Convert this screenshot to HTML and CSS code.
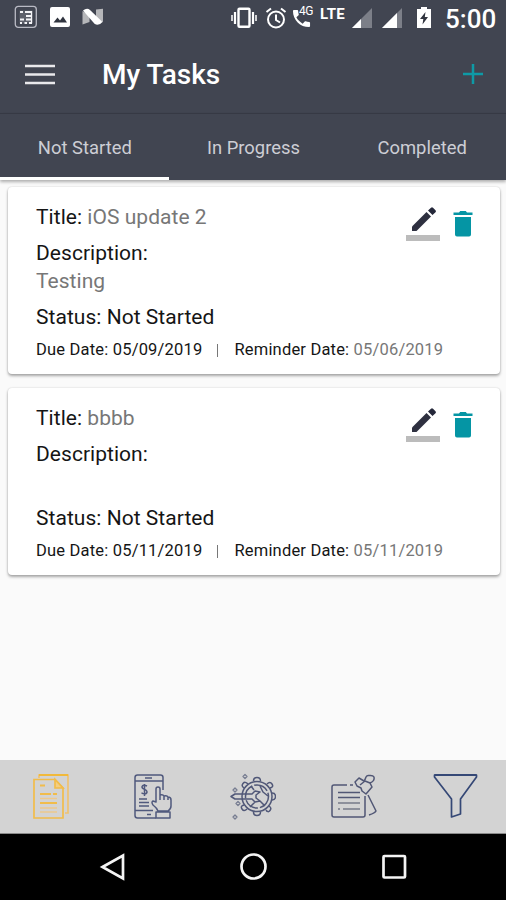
FILE: index.html
```html
<!DOCTYPE html>
<html lang="en">
<head>
<meta charset="utf-8">
<title>My Tasks</title>
<link rel="stylesheet" href="styles.css">
</head>
<body>
<div class="screen">
  <div class="status">
    <div class="status-group">
      <svg width="24" height="24" viewBox="0 0 24 24" fill="none"><rect x="1.3" y="1.3" width="21" height="21" rx="3" stroke="#b9bac4" stroke-width="1.3"/><path d="M5.500 5.500h13v13h-13z" fill="#5d606b"/><path d="M6 7h3M11 7h7M12 11h6M6 14.500h4M12 14.500h6M6 18h2M10.500 18h2.500M15 18h3" stroke="#f4f4f7" stroke-width="1.800"/><path d="M17.500 6v12" stroke="#f4f4f7" stroke-width="1.300"/></svg>
      <svg width="20" height="20" viewBox="0 0 20 20"><rect width="20" height="20" rx="2" fill="#fff"/><path d="M3.500 15.500 7.500 10.500l2.500 3L13 9.500l4 6z" fill="#30343f"/></svg>
      <svg width="22" height="18" viewBox="0 0 22 18"><path d="M.5 3l7 4v7l-7 2.500zM14 1.500l7-.8v13.500l-7-4z" fill="#b5b6b9"/><path d="M1 2.500Q5-.8 8 2l12.500 12q-4 4.500-8 1.800z" fill="#fff"/></svg>
    </div>
    <div class="status-group status-right">
      <svg width="26" height="22" viewBox="0 0 26 22" fill="none" stroke="#fff"><rect x="7.500" y="1.800" width="11" height="18" rx="1" stroke-width="2.400"/><path d="M4 5v12M22 5v12" stroke-width="2.200"/><path d="M1 8v6M25 8v6" stroke-width="1.500"/></svg>
      <svg class="alarm" width="22" height="22" viewBox="0 0 22 22" fill="none" stroke="#fff" stroke-width="2"><circle cx="11" cy="12.500" r="8"/><path d="M11 7.500V13l4 2.500M1.500 5 6 1.500M20.500 5 16 1.500"/></svg>
      <div class="call">
        <svg width="19" height="19" viewBox="2 2 20 20"><path fill="#fff" d="M6.600 10.800c1.400 2.800 3.800 5.100 6.600 6.600l2.200-2.200c.3-.3.700-.4 1-.2 1.100.4 2.300.6 3.600.6.600 0 1 .4 1 1V20c0 .600-.4 1-1 1C10.600 21 3 13.400 3 4c0-.6.400-1 1-1h3.500c.6 0 1 .4 1 1 0 1.300.2 2.500.6 3.600.1.300 0 .7-.2 1z"/></svg>
        <span class="net4g">4G</span>
      </div>
      <span class="lte">LTE</span>
      <svg class="signal" width="20" height="20" viewBox="0 0 20 20"><path d="M0 20 20 0v20z" fill="#7c7f88"/><path d="M0 20 9 11v9z" fill="#fff"/></svg>
      <svg class="signal2" width="20" height="20" viewBox="0 0 20 20"><path d="M0 20 20 0v20z" fill="#7c7f88"/><path d="M0 20 15 5v15z" fill="#fff"/></svg>
      <svg class="battery" width="14" height="21" viewBox="0 0 14 21"><path d="M4 0h6v2h4v19H0V2h4z" fill="#fff"/><path d="M8.500 5 3 12h3.300L5.500 17.500 11 10H7.800z" fill="#30343f"/></svg>
      <span class="clock">5:00</span>
    </div>
  </div>
  <header class="appbar">
    <svg width="30" height="22" viewBox="0 0 30 22"><path d="M0 2h30M0 10.500h30M0 19h30" stroke="#e9e9ec" stroke-width="2.400"/></svg>
    <h1>My Tasks</h1>
    <svg class="add" width="20" height="20" viewBox="0 0 20 20"><path d="M0 10h20M10 0v20" stroke="#0e9aa6" stroke-width="2.500"/></svg>
  </header>
  <nav class="tabs">
    <div class="tab active">Not Started</div>
    <div class="tab">In Progress</div>
    <div class="tab">Completed</div>
  </nav>
  <main class="list">
    <article class="card">
      <div class="info">
        <p class="line title">Title: <span class="muted">iOS update 2</span></p>
        <p class="line">Description:</p>
        <p class="line desc muted">Testing</p>
        <p class="line state">Status: Not Started</p>
        <p class="dates"><span>Due Date: 05/09/2019</span><i class="sep"></i><span>Reminder Date: <span class="muted">05/06/2019</span></span></p>
      </div>
      <div class="actions">
        <svg width="34" height="36" viewBox="0 0 34 36"><path d="M6 20.500 20.500 6l4.500 4.500L10.500 25H6z" fill="#2e3040"/><path d="M22 4.500 25 1.700q1-1 2 0l2.500 2.500q1 1 0 2L26.500 9z" fill="#25283a"/><path d="M0 29h34v6H0z" fill="#bcbcbc"/></svg>
        <svg class="trash" width="20" height="26" viewBox="0 0 20 26"><path d="M.5 1.500H6L7.200 0h5.600L14 1.500h5.500V4H.5zM2 6h16v17.500q0 2-2 2H4q-2 0-2-2z" fill="#0595a4"/></svg>
      </div>
    </article>
    <article class="card">
      <div class="info">
        <p class="line title">Title: <span class="muted">bbbb</span></p>
        <p class="line">Description:</p>
        <p class="line desc muted"></p>
        <p class="line state">Status: Not Started</p>
        <p class="dates"><span>Due Date: 05/11/2019</span><i class="sep"></i><span>Reminder Date: <span class="muted">05/11/2019</span></span></p>
      </div>
      <div class="actions">
        <svg width="34" height="36" viewBox="0 0 34 36"><path d="M6 20.500 20.500 6l4.500 4.500L10.500 25H6z" fill="#2e3040"/><path d="M22 4.500 25 1.700q1-1 2 0l2.500 2.500q1 1 0 2L26.500 9z" fill="#25283a"/><path d="M0 29h34v6H0z" fill="#bcbcbc"/></svg>
        <svg class="trash" width="20" height="26" viewBox="0 0 20 26"><path d="M.5 1.500H6L7.200 0h5.600L14 1.500h5.500V4H.5zM2 6h16v17.500q0 2-2 2H4q-2 0-2-2z" fill="#0595a4"/></svg>
      </div>
    </article>
  </main>
  <nav class="bottom">
    <div class="item docs">
      <svg width="50" height="50" viewBox="0 0 50 50" fill="none" stroke="#f1bc4a" stroke-width="1.700"><path d="M12 6V3h29v38h-3" stroke="#efc271"/><path d="M12 3h29" stroke="#f2b72e"/><path d="M7 7.500h21l8 8.500v30H7z"/><path d="M28 7.500V16h8z" fill="#f3ce82"/><path d="M13 13.500h5M13 22h11M26 22h4M13 31h17" stroke-width="2"/><path d="M13 26.500h17M13 36h17M13 40h17" stroke="#edc98d" stroke-width="1.500"/></svg>
    </div>
    <div class="item">
      <svg width="50" height="50" viewBox="0 0 50 50" fill="none" stroke="#50597d" stroke-width="1.500" stroke-linejoin="round"><path d="M36 18V5.500Q36 3 33.500 3H10.500Q8 3 8 5.500v38Q8 46 10.500 46H29M8 9h28M8 38.500h18"/><path d="M18 6h7M20 42.500h4"/><path d="M20 14q-4-2-5 .7c-.5 3 5 2 5 5 0 3-4 2.300-5.500 1M17.500 12v12M12 27h8M12 30.500h10M12 34h10"/><path d="M29 30V17q0-2 2-2t2 2v6q3-1 4 1 3-1 4 1 3 0 3 3v6q0 3-3 5H31q-1-3-5-6-2-3 0-4zM33 23v5M37 24v4M41 25v3M29 40h14v6H29z"/></svg>
    </div>
    <div class="item gear">
      <svg width="50" height="50" viewBox="0 0 50 50" fill="none" stroke="#515878" stroke-width="1.500" stroke-linejoin="round"><circle cx="31" cy="24.500" r="15"/><circle cx="31" cy="24.500" r="11.500" stroke-dasharray="15 2"/><path d="M27.500 9q0-3.500 3.500-3.500T34.500 9M41 12q3-3 5 0t-2 4M46 21q3.500 0 3.500 3.500T46 28M43 34q3 2 1 4.500t-4-.5M34.500 40q0 3.500-3.500 3.500T27.500 40M21 37q-3 3-5 0t2-4M18 16q-3-2-1-4.500t5 .5"/><path d="M5 24.500 9 22h17l3-3 5 1-4 3v3l4 3-5 1-3-3H9zM34 14l3 6 5 4M25 14l3 4M24 35l5-5M34 29l5 5"/><path d="M19 2.500l2 2-2 2-2-2zM9 16l2 2-2 2-2-2zM12 29.500l2 2-2 2-2-2zM9 43l2 2-2 2-2-2z" stroke="#777d91" stroke-width="1.300"/></svg>
    </div>
    <div class="item clip">
      <svg width="50" height="50" viewBox="0 0 50 50" fill="none" stroke="#515775" stroke-width="1.500" stroke-linejoin="round"><path d="M20 13H7q-2 0-2 2v28q0 2 2 2h29q2 0 2-2V24M23 13h3M11 20.500h22M11 25.500h22"/><path d="M11 31h22M16 37h17M11 37h2" stroke="#777b89"/><path d="m28 10 4-4 5 3q1-1 2-4 1-2 3-1.500 4-.5 5 1.500 1 4-4 6l2 4-6 7-4-3-1-3-4-2zM33 13l5-4 5 2M41 23l8 16q-1 2-7 4"/></svg>
    </div>
    <div class="item">
      <svg width="50" height="50" viewBox="0 0 50 50" fill="none" stroke="#354876" stroke-width="1.700" stroke-linejoin="round"><path d="M4.500 3h42v2l-16 22v15l-9 3V27l-17-22z"/><path d="M4.500 3h42" stroke-width="2"/></svg>
    </div>
  </nav>
  <footer class="sysnav">
    <svg width="28" height="28" viewBox="0 0 28 28"><path d="M4.500 14 25 2.500v23z"/></svg>
    <svg width="28" height="28" viewBox="0 0 28 28"><circle cx="14.500" cy="13.500" r="12"/></svg>
    <svg width="28" height="28" viewBox="0 0 28 28"><rect x="3.500" y="3" width="21.500" height="21.500" rx="1"/></svg>
  </footer>
</div>
</body>
</html>
```
FILE: styles.css
```css
* { box-sizing: border-box; }
body { margin: 0; font-family: Roboto, "Liberation Sans", sans-serif; background: #fafafa; }
h1, p { margin: 0; }
svg { display: block; flex: none; }
.screen { width: 506px; height: 900px; display: flex; flex-direction: column; overflow: hidden; }
.status { height: 36px; flex: none; padding: 0 11px 2px 14px; display: flex; justify-content: space-between; align-items: center; background: #414551; color: #fff; }
.status-group { display: flex; align-items: center; gap: 12px; }
.status-right { gap: 0; }
.status-right > svg { margin-top: 1px; }
.status-right > .alarm { margin-left: 8px; }
.call { position: relative; margin-left: 5px; padding-top: 3px; width: 28px; }
.net4g { position: absolute; left: 7px; top: -1px; font-size: 12px; line-height: 13px; letter-spacing: -.4px; }
.lte { width: 32px; font-size: 15px; line-height: 14px; font-weight: 700; margin-bottom: 7px; letter-spacing: .2px; }
.status-right > .signal2 { margin-left: 10px; }
.status-right > .battery { margin-left: 15px; }
.clock { width: 50px; margin: 4px 0 0 14px; font-size: 26px; line-height: 30px; font-weight: 500; white-space: nowrap; }
.appbar { height: 77px; flex: none; padding: 0 23px 0 25px; display: flex; align-items: center; background: #414551; color: #fff; }
.appbar h1 { margin-left: 47px; font-size: 28px; line-height: 34px; font-weight: 500; }
.add { margin: -2px 0 0 auto; }
.tabs { height: 67px; flex: none; display: grid; grid-template-columns: repeat(3, 1fr); background: #414551; border-top: 1px solid #363944; box-shadow: 0 2px 3px rgba(0, 0, 0, .3); }
.tab { display: flex; align-items: center; justify-content: center; padding: 4px 0 0 1px; font-size: 18.400px; color: #cdced5; border-bottom: 3px solid #414551; }
.tab.active { border-bottom-color: #fff; }
.list { flex: 1; padding: 7px 6px 0 8px; display: flex; flex-direction: column; gap: 14px; }
.card { height: 187px; padding: 16px 27px 0 28px; display: flex; border-radius: 4px; background: #fff; box-shadow: 0 2px 3px rgba(0, 0, 0, .32), 0 0 2px rgba(0, 0, 0, .16); }
.info { flex: 1; min-width: 0; display: flex; flex-direction: column; white-space: nowrap; color: #151515; }
.line { height: 28px; font-size: 21px; line-height: 28px; letter-spacing: .04px; }
.title { margin-bottom: 8px; }
.state { margin-top: 8px; }
.muted { color: #777; }
.dates { display: flex; align-items: center; height: 24px; margin-top: 7px; font-size: 16.500px; line-height: 24px; letter-spacing: .19px; }
.dates > span { flex: none; }
.sep { flex: none; width: 1px; height: 13px; margin: 0 16px 0 15px; background: #777; }
.actions { display: flex; gap: 13px; padding-top: 3px; }
.trash { margin-top: 5px; }
.bottom { height: 74px; flex: none; display: grid; grid-template-columns: repeat(5, 1fr); background: #d3d3d3; border-bottom: 1px solid #8a8a8a; }
.item { display: flex; align-items: center; justify-content: center; }
.docs { padding-left: 2px; }
.gear { padding-right: 4px; }
.clip { padding-right: 5px; }
.sysnav { height: 66px; flex: none; padding: 0 98px; display: flex; justify-content: space-between; align-items: center; background: #000; }
.sysnav svg { fill: none; stroke: #f4f4f4; stroke-width: 2.700px; }
```
